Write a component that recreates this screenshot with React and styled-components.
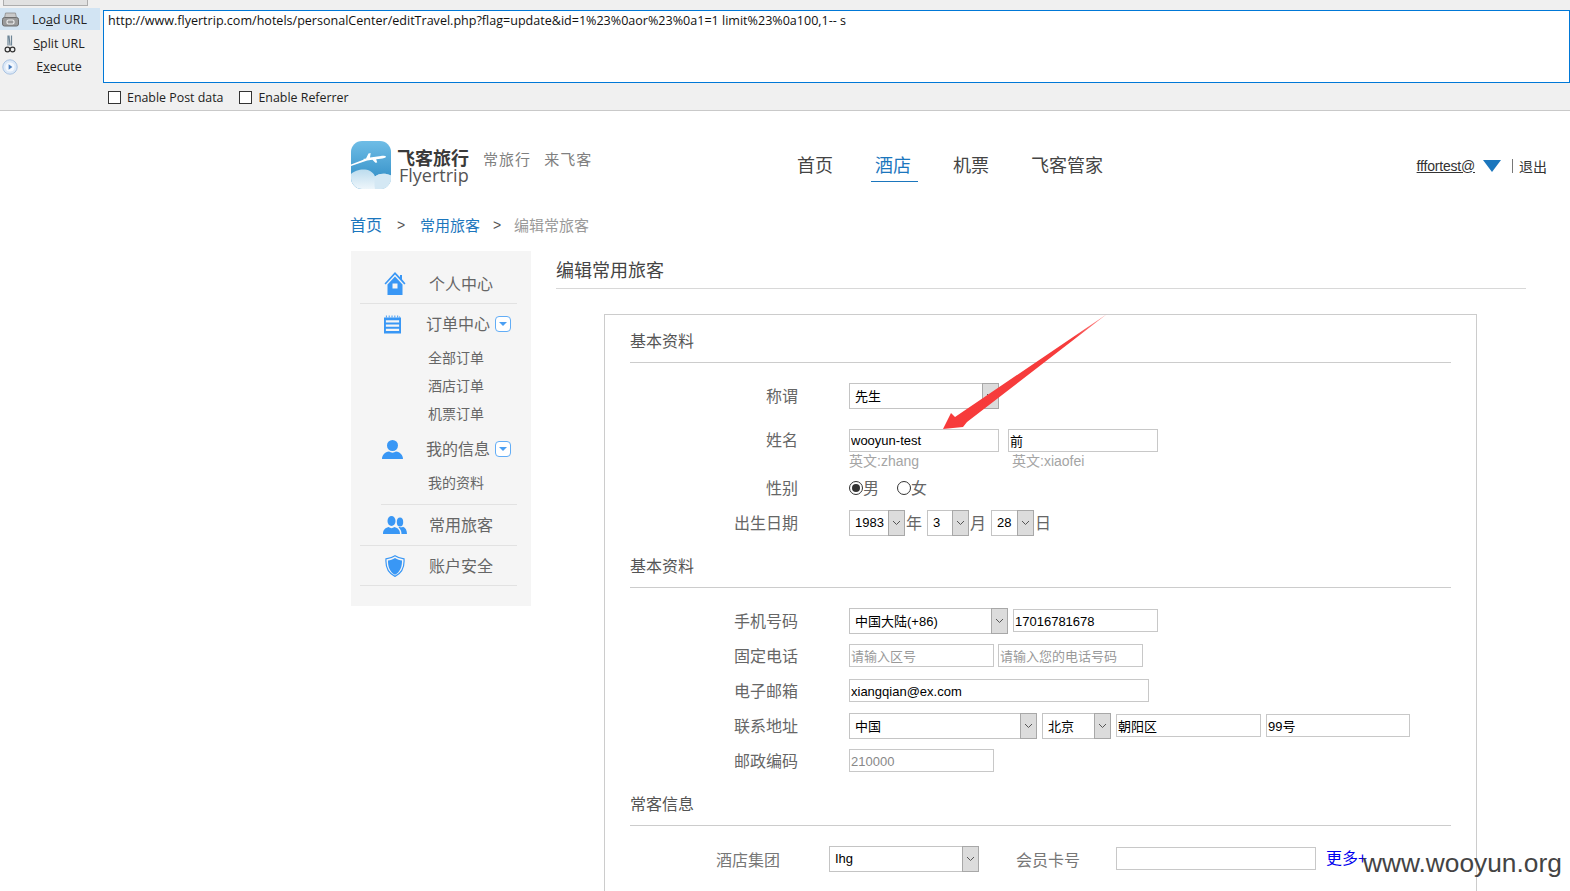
import React from 'react';
import styled, { createGlobalStyle } from 'styled-components';

const CJK = '"Noto Sans CJK SC", "Liberation Sans", sans-serif';
const UI = '"Open Sans", "Noto Sans", sans-serif';
const FIELD = '"Liberation Sans", "Noto Sans CJK SC", sans-serif';
const BLUE = '#3997f5';

const Global = createGlobalStyle`
  html, body { margin: 0; padding: 0; height: 891px; overflow: hidden; background: #fff; }
  * { box-sizing: border-box; }
`;

const Page = styled.div`
  position: relative;
  width: 1570px;
  height: 891px;
  overflow: hidden;
  font-family: ${CJK};
  color: #666;
`;

/* hackbar */
const Bar = styled.div`
  display: flex;
  height: 111px;
  background: #f0f0f0;
  border-bottom: 1px solid #c9c9c9;
  font-family: ${UI};
  font-size: 12.4px;
  color: #222;
`;
const Side = styled.div`
  width: 103px;
  flex: none;
`;
const Stub = styled.div`
  width: 85px;
  height: 6px;
  margin: 0 0 2px 3px;
  background: #e1e1e1;
  border: 1px solid #adadad;
  border-top: 0;
`;
const Tool = styled.div`
  display: flex;
  align-items: center;
  width: 100px;
  height: ${p => (p.$on ? 22 : 23)}px;
  margin-bottom: ${p => (p.$on ? 2 : 0)}px;
  padding-left: 2px;
  background: ${p => (p.$on ? '#d2e4f3' : 'transparent')};
`;
const ToolText = styled.span`
  flex: 1;
  text-align: center;
`;
const UrlCol = styled.div`
  flex: 1;
  min-width: 0;
  padding-top: 10px;
`;
const UrlBox = styled.textarea`
  display: block;
  width: 100%;
  height: 73px;
  padding: 1px 4px;
  margin: 0;
  border: 1px solid #0078d7;
  outline: 0;
  resize: none;
  background: #fff;
  color: #111;
  font-family: ${UI};
  font-size: 12.55px;
  line-height: 17px;
`;
const Checks = styled.div`
  display: flex;
  align-items: center;
  gap: 16px;
  height: 28px;
  padding-left: 5px;
`;
const Check = styled.label`
  display: flex;
  align-items: center;
  gap: 6px;
`;
const Box = styled.span`
  width: 13px;
  height: 13px;
  background: #fff;
  border: 1px solid #333;
`;

/* site header */
const Header = styled.header`
  display: flex;
  align-items: center;
  height: 48px;
  margin-top: 30px;
  padding: 0 23px 0 351px;
`;
const Brand = styled.div`
  display: flex;
  align-items: center;
  width: 446px;
  flex: none;
`;
const BrandText = styled.div`
  display: flex;
  flex-direction: column;
  margin-left: 6px;
  margin-top: 1px;
`;
const BrandCn = styled.span`
  font-size: 18px;
  line-height: 18px;
  font-weight: 700;
  color: #3a3a3a;
`;
const BrandEn = styled.span`
  font-family: "Open Sans", sans-serif;
  font-size: 18px;
  line-height: 18px;
  margin-left: 2px;
  color: #555;
`;
const Slogan = styled.span`
  margin: -14px 0 0 14px;
  font-size: 15px;
  letter-spacing: 1px;
  word-spacing: 9px;
  color: #808080;
`;
const Nav = styled.nav`
  display: flex;
  gap: 42px;
  height: 34px;
  margin-top: -3px;
`;
const NavItem = styled.a`
  position: relative;
  font-size: 18px;
  line-height: 34px;
  color: ${p => (p.$on ? '#1b76bd' : '#444')};
  &::after {
    content: '';
    display: ${p => (p.$on ? 'block' : 'none')};
    position: absolute;
    left: -4px;
    right: -7px;
    bottom: -1px;
    height: 1px;
    background: #1b76bd;
  }
`;
const User = styled.div`
  display: flex;
  align-items: center;
  margin-left: auto;
  margin-top: 1px;
  font-size: 14px;
  color: #333;
`;
const UserName = styled.a`
  text-decoration: underline;
  font-family: ${FIELD};
  letter-spacing: -0.2px;
`;
const Caret = styled.span`
  width: 0;
  height: 0;
  margin: 0 11px 0 8px;
  border-left: 9px solid transparent;
  border-right: 9px solid transparent;
  border-top: 12px solid #1b76bd;
`;
const Logout = styled.span`
  padding-left: 6px;
  line-height: 14px;
  border-left: 1px solid #777;
`;

const Crumbs = styled.div`
  display: flex;
  align-items: center;
  height: 24px;
  margin: 23px 0 15px 350px;
  font-size: 15px;
`;
const Crumb = styled.a`
  color: ${p => (p.$muted ? '#999' : '#1b76bd')};
  font-size: ${p => (p.$big ? 16 : 15)}px;
`;
const Sep = styled.span`
  width: ${p => p.$w}px;
  margin-top: 2px;
  text-align: center;
  font-family: ${FIELD};
  font-size: 14px;
  color: #555;
`;

const Content = styled.div`
  display: flex;
  padding-left: 351px;
`;

/* sidebar */
const Menu = styled.aside`
  flex: none;
  width: 180px;
  height: 355px;
  padding: 13px 14px 0 9px;
  background: #f5f5f5;
`;
const MenuRow = styled.div`
  display: flex;
  align-items: center;
  height: ${p => p.$h || 40}px;
  margin-left: ${p => p.$inset || 0}px;
  border-bottom: ${p => (p.$line ? '1px solid #e2e2e2' : '0')};
`;
const MenuIcon = styled.span`
  display: flex;
  justify-content: center;
  flex: none;
  width: ${p => (p.$tight ? 64 : 69)}px;
  margin-right: ${p => (p.$tight ? 2 : 0)}px;
`;
const MenuText = styled.span`
  margin-top: -2px;
  font-size: 16px;
  line-height: 22px;
  color: #666;
`;
const Toggle = styled.span`
  display: flex;
  align-items: center;
  justify-content: center;
  width: 16px;
  height: 16px;
  margin-left: 5px;
  margin-top: -1px;
  border: 1px solid #62adf6;
  border-radius: 4px;
  background: #fff;
  &::after {
    content: '';
    border-left: 4px solid transparent;
    border-right: 4px solid transparent;
    border-top: 4px solid #4a9ff3;
    margin-top: 1px;
  }
`;
const SubItem = styled.div`
  height: 28px;
  padding-left: 68px;
  font-size: 14px;
  line-height: 28px;
  color: #666;
`;
const SubList = styled.div`
  margin-top: -1px;
  margin-bottom: ${p => p.$bottom || 0}px;
`;

/* main column */
const Main = styled.main`
  width: 970px;
  margin-left: 25px;
`;
const PageTitle = styled.h1`
  height: 38px;
  margin: 0;
  font-size: 18px;
  font-weight: 400;
  line-height: 36px;
  color: #444;
  border-bottom: 1px solid #d8d8d8;
`;
const Card = styled.section`
  width: 873px;
  margin: 25px 0 0 48px;
  padding: 12px 25px 40px;
  border: 1px solid #ccc;
`;
const SectionHead = styled.h2`
  height: 36px;
  margin: ${p => p.$top || 0}px 0 15px;
  font-size: 16px;
  font-weight: 400;
  line-height: 27px;
  color: #555;
  border-bottom: 1px solid #ccc;
`;
const Row = styled.div`
  display: flex;
  align-items: center;
  height: ${p => p.$h || 35}px;
  margin-top: ${p => p.$top || 0}px;
`;
const Label = styled.span`
  flex: none;
  width: 168px;
  margin: -2px 51px 0 0;
  font-size: 16px;
  text-align: right;
  color: #666;
`;
const Offset = styled.div`
  flex: none;
  width: ${p => p.$w}px;
`;
const Field = styled.input`
  flex: none;
  width: ${p => p.$w}px;
  height: 23px;
  margin: 0 ${p => p.$gap || 0}px 0 0;
  padding: ${p => (p.$cjk ? 0 : 2)}px 1px 0;
  border: 1px solid #c8c8c8;
  outline: 0;
  background: #fff;
  color: ${p => (p.$muted ? '#888' : '#000')};
  font-family: ${FIELD};
  font-size: 13px;
  &::placeholder { color: #999; opacity: 1; }
`;
const Select = styled.div`
  display: flex;
  align-items: center;
  flex: none;
  width: ${p => p.$w}px;
  height: 26px;
  margin-right: ${p => p.$gap || 0}px;
  padding-left: 5px;
  border: 1px solid #c4c4c4;
  background: #fff;
  color: #000;
  font-family: ${FIELD};
  font-size: 13px;
`;
const SelectText = styled.span`
  flex: 1;
  min-width: 0;
  white-space: nowrap;
`;
const SelectBtn = styled.span`
  display: flex;
  align-items: center;
  justify-content: center;
  flex: none;
  width: 17px;
  height: 26px;
  margin-right: -1px;
  background: #dcdcdc;
  border: 1px solid #a8a8a8;
  color: #555;
`;
const Hint = styled.span`
  flex: none;
  width: ${p => p.$w}px;
  margin-top: -2px;
  font-family: ${FIELD};
  font-size: 14px;
  color: #a5a5a5;
`;
const Unit = styled.span`
  flex: none;
  width: ${p => p.$w}px;
  margin-top: -2px;
  padding-left: 1px;
  font-size: 16px;
  color: #666;
`;
const Radio = styled.span`
  display: flex;
  align-items: center;
  flex: none;
  margin: -2px 18px 0 0;
  font-size: 16px;
  color: #666;
`;
const Dot = styled.span`
  display: flex;
  align-items: center;
  justify-content: center;
  width: 14px;
  height: 14px;
  margin-top: 2px;
  border: 1px solid #333;
  border-radius: 50%;
  &::after {
    content: '';
    display: ${p => (p.$on ? 'block' : 'none')};
    width: 8px;
    height: 8px;
    border-radius: 50%;
    background: #333;
  }
`;
const PlainLabel = styled.span`
  flex: none;
  width: ${p => p.$w}px;
  font-size: 16px;
  color: #777;
`;
const More = styled.a`
  margin: -3px 0 0 10px;
  font-size: 16px;
  color: #0000ee;
`;

/* things lying over the page */
const Watermark = styled.div`
  position: absolute;
  left: 1363px;
  top: 846px;
  font-family: "Liberation Sans", sans-serif;
  font-size: 26.3px;
  line-height: 34px;
  color: #444;
`;
const Arrow = styled.svg`
  position: absolute;
  left: 930px;
  top: 310px;
`;

const Chevron = () => (
  <svg width="9" height="6" viewBox="0 0 9 6" fill="none" stroke="#555" strokeWidth="1">
    <path d="M1 1l3.5 3.5L8 1" />
  </svg>
);

const Drop = ({ w, gap, children }) => (
  <Select $w={w} $gap={gap}>
    <SelectText>{children}</SelectText>
    <SelectBtn><Chevron /></SelectBtn>
  </Select>
);

const LoadIcon = () => (
  <svg width="17" height="15" viewBox="0 0 17 15">
    <path d="M3.5 1h10l1 5h-12z" fill="#c9c9c9" stroke="#8c8c8c" strokeWidth=".8" />
    <rect x="0.5" y="5.5" width="16" height="8.5" rx="2" fill="#9a9a9a" stroke="#6e6e6e" />
    <rect x="5" y="8" width="7" height="4" rx="1.5" fill="none" stroke="#eee" strokeWidth="1.2" />
  </svg>
);
const SplitIcon = () => (
  <svg width="16" height="18" viewBox="0 0 16 18" fill="none">
    <path d="M6 0.5v10M7 0.5l1 10M9.5 0.5v10" stroke="#6d8596" strokeWidth="1.2" />
    <circle cx="5.5" cy="14.5" r="2.4" stroke="#333" strokeWidth="1.2" />
    <circle cx="10.5" cy="14.5" r="2.4" stroke="#333" strokeWidth="1.2" />
  </svg>
);
const PlayIcon = () => (
  <svg width="16" height="16" viewBox="0 0 16 16">
    <circle cx="8" cy="8" r="7.2" fill="#dbe8f7" stroke="#a9c3e2" />
    <circle cx="8" cy="8" r="4.6" fill="#f4f8fd" />
    <path d="M6.6 5.2L10.4 8l-3.8 2.8z" fill="#4a7fc1" />
  </svg>
);

const Logo = () => (
  <svg width="40" height="48" viewBox="0 0 40 48">
    <defs>
      <linearGradient id="sky" x1="0" y1="0" x2="0" y2="1">
        <stop offset="0" stopColor="#6fbde6" />
        <stop offset="1" stopColor="#2a88c2" />
      </linearGradient>
      <linearGradient id="cloud" x1="0" y1="0" x2="0" y2="1">
        <stop offset="0" stopColor="#bcdcee" />
        <stop offset="1" stopColor="#eef6fb" />
      </linearGradient>
      <clipPath id="tile"><rect width="40" height="48" rx="11" /></clipPath>
    </defs>
    <g clipPath="url(#tile)">
      <rect width="40" height="48" fill="url(#sky)" />
      <path d="M0 23.5L13 18.5l-1-.6 3-.4 2.5-5 2.2-.4-.7 4.4 11-1.6c2-.3 5-.1 5 .8s-3 1.6-5.4 2l-4.4.6 1 3.2-1.8.3-3-3-5.2.7L0 25z" fill="#fff" />
      <path d="M0 48V33c3-3 9-5 14-4.500 5 .5 9 3.500 10 7 3-3 10-4 16-1v13.500z" fill="url(#cloud)" />
      <path d="M24 48c-1-6 0-11 0-12.500 3-3 10-4 16-1V48z" fill="#d4e8f4" />
    </g>
  </svg>
);

const HomeIcon = () => (
  <svg width="22" height="23" viewBox="0 0 22 23" fill={BLUE}>
    <path d="M11 0L0.5 11.5l1.2 1L11 2.6l9.300 9.900 1.200-1L18 7.300V3h-2v2.200z" />
    <path fillRule="evenodd" d="M11 4.600L3.500 12.500V23h15V12.500zM8.500 11.500h5v5h-5z" />
  </svg>
);
const NotesIcon = () => (
  <svg width="17" height="19" viewBox="0 0 18 19" fill={BLUE}>
    <path d="M2 0h1v2H2zM5 0h1v2H5zM8 0h1v2H8zM11 0h1v2h-1zM14 0h1v2h-1zM16 1h1v1h-1z" />
    <path fillRule="evenodd" d="M0 2h18v17H0zM2 5v2.500h14V5zM2 9.500V12h14V9.500zM2 14v2.500h14V14z" />
  </svg>
);
const PersonIcon = () => (
  <svg width="21" height="19" viewBox="0 0 21 19" fill={BLUE}>
    <circle cx="10.500" cy="5.500" r="5.500" />
    <path d="M0 19c0-4 3-7 7-7.500 2 1.500 5 1.500 7 0 4 .5 7 3.500 7 7.500z" />
  </svg>
);
const PeopleIcon = () => (
  <svg width="24" height="18" viewBox="0 0 24 18" fill={BLUE}>
    <ellipse cx="8.500" cy="5" rx="4" ry="5" />
    <path d="M0 18c0-4 2-6 5.500-7 2 1.500 4 1.500 6 0 3.500 1 5.500 3 5.500 7z" />
    <ellipse cx="17" cy="6" rx="3.200" ry="4.500" />
    <path d="M18.500 18c0-3-1-5-3-6.500l1-.8c1.200.8 2.400.8 3.500 0 2.500 1 4 3.500 4 7.300z" />
  </svg>
);
const ShieldIcon = () => (
  <svg width="20" height="22" viewBox="0 0 20 22">
    <path d="M10 0.800C7 2.800 4 3.600 1 3.800c-.6 8 2 14.500 9 17.600 7-3.100 9.600-9.600 9-17.600-3-.2-6-1-9-3z" fill="none" stroke={BLUE} strokeWidth="1.200" />
    <path d="M10 3C7.600 4.500 5.300 5.200 3 5.500c-.2 6.500 2 11.700 7 14.300 5-2.600 7.200-7.800 7-14.300-2.300-.3-4.600-1-7-2.500z" fill={BLUE} />
  </svg>
);

export default function App() {
  return (
    <Page>
      <Global />
      <Bar>
        <Side>
          <Stub />
          <Tool $on><LoadIcon /><ToolText>Lo<u>a</u>d URL</ToolText></Tool>
          <Tool><SplitIcon /><ToolText><u>S</u>plit URL</ToolText></Tool>
          <Tool><PlayIcon /><ToolText>E<u>x</u>ecute</ToolText></Tool>
        </Side>
        <UrlCol>
          <UrlBox readOnly defaultValue="http://www.flyertrip.com/hotels/personalCenter/editTravel.php?flag=update&id=1%23%0aor%23%0a1=1 limit%23%0a100,1-- s" />
          <Checks>
            <Check><Box />Enable Post data</Check>
            <Check><Box />Enable Referrer</Check>
          </Checks>
        </UrlCol>
      </Bar>

      <Header>
        <Brand>
          <Logo />
          <BrandText>
            <BrandCn>飞客旅行</BrandCn>
            <BrandEn>Flyertrip</BrandEn>
          </BrandText>
          <Slogan>常旅行 来飞客</Slogan>
        </Brand>
        <Nav>
          <NavItem>首页</NavItem>
          <NavItem $on>酒店</NavItem>
          <NavItem>机票</NavItem>
          <NavItem>飞客管家</NavItem>
        </Nav>
        <User>
          <UserName>fffortest@</UserName>
          <Caret />
          <Logout>退出</Logout>
        </User>
      </Header>

      <Crumbs>
        <Crumb $big>首页</Crumb>
        <Sep $w={38}>&gt;</Sep>
        <Crumb>常用旅客</Crumb>
        <Sep $w={34}>&gt;</Sep>
        <Crumb $muted>编辑常旅客</Crumb>
      </Crumbs>

      <Content>
        <Menu>
          <MenuRow $line>
            <MenuIcon><HomeIcon /></MenuIcon>
            <MenuText>个人中心</MenuText>
          </MenuRow>
          <MenuRow>
            <MenuIcon $tight><NotesIcon /></MenuIcon>
            <MenuText>订单中心</MenuText>
            <Toggle />
          </MenuRow>
          <SubList $bottom={2}>
            <SubItem>全部订单</SubItem>
            <SubItem>酒店订单</SubItem>
            <SubItem>机票订单</SubItem>
          </SubList>
          <MenuRow>
            <MenuIcon $tight><PersonIcon /></MenuIcon>
            <MenuText>我的信息</MenuText>
            <Toggle />
          </MenuRow>
          <SubList $bottom={8}>
            <SubItem>我的资料</SubItem>
          </SubList>
          <MenuRow $inset={21} $h={1} $line />
          <MenuRow $line $h={41}>
            <MenuIcon><PeopleIcon /></MenuIcon>
            <MenuText>常用旅客</MenuText>
          </MenuRow>
          <MenuRow $line>
            <MenuIcon><ShieldIcon /></MenuIcon>
            <MenuText>账户安全</MenuText>
          </MenuRow>
        </Menu>

        <Main>
          <PageTitle>编辑常用旅客</PageTitle>
          <Card>
            <SectionHead>基本资料</SectionHead>
            <Row>
              <Label>称谓</Label>
              <Drop w={150}>先生</Drop>
            </Row>
            <Row $h={24} $top={15}>
              <Label>姓名</Label>
              <Field $w={150} $gap={9} $cjk readOnly defaultValue="wooyun-test" />
              <Field $w={150} $cjk readOnly defaultValue="前" />
            </Row>
            <Row $h={18}>
              <Label />
              <Hint $w={163}>英文:zhang</Hint>
              <Hint $w={150}>英文:xiaofei</Hint>
            </Row>
            <Row>
              <Label>性别</Label>
              <Radio><Dot $on />男</Radio>
              <Radio><Dot />女</Radio>
            </Row>
            <Row>
              <Label>出生日期</Label>
              <Drop w={56}>1983</Drop>
              <Unit $w={22}>年</Unit>
              <Drop w={42}>3</Drop>
              <Unit $w={22}>月</Unit>
              <Drop w={43}>28</Drop>
              <Unit $w={20}>日</Unit>
            </Row>

            <SectionHead $top={12}>基本资料</SectionHead>
            <Row>
              <Label>手机号码</Label>
              <Drop w={159} gap={5}>中国大陆(+86)</Drop>
              <Field $w={145} readOnly defaultValue="17016781678" />
            </Row>
            <Row>
              <Label>固定电话</Label>
              <Field $w={145} $gap={4} placeholder="请输入区号" />
              <Field $w={145} placeholder="请输入您的电话号码" />
            </Row>
            <Row>
              <Label>电子邮箱</Label>
              <Field $w={300} readOnly defaultValue="xiangqian@ex.com" />
            </Row>
            <Row>
              <Label>联系地址</Label>
              <Drop w={188} gap={5}>中国</Drop>
              <Drop w={69} gap={5}>北京</Drop>
              <Field $w={145} $gap={5} $cjk readOnly defaultValue="朝阳区" />
              <Field $w={144} $cjk readOnly defaultValue="99号" />
            </Row>
            <Row>
              <Label>邮政编码</Label>
              <Field $w={145} $muted readOnly defaultValue="210000" />
            </Row>

            <SectionHead $top={12}>常客信息</SectionHead>
            <Row>
              <Offset $w={86} />
              <PlainLabel $w={113}>酒店集团</PlainLabel>
              <Drop w={150} gap={37}>Ihg</Drop>
              <PlainLabel $w={100}>会员卡号</PlainLabel>
              <Field $w={200} />
              <More>更多+</More>
            </Row>
          </Card>
        </Main>
      </Content>

      <Arrow width="190" height="130" viewBox="930 310 190 130">
        <defs>
          <linearGradient id="streak" x1="1107" y1="314" x2="943" y2="429" gradientUnits="userSpaceOnUse">
            <stop offset="0" stopColor="#ff6b6b" stopOpacity=".7" />
            <stop offset=".2" stopColor="#f63c3c" />
            <stop offset="1" stopColor="#f73b3b" />
          </linearGradient>
        </defs>
        <polygon points="943,429 951,413 955,417 1107,314 967,422 963,427" fill="url(#streak)" />
      </Arrow>
      <Watermark>www.wooyun.org</Watermark>
    </Page>
  );
}
